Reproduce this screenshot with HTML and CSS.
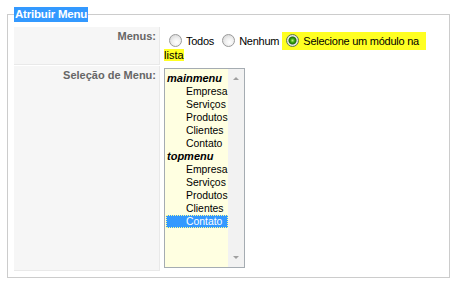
FILE: index.html
```html
<!DOCTYPE html>
<html>
<head>
<meta charset="utf-8">
<link rel="stylesheet" href="styles.css">
</head>
<body>
<fieldset class="adminform">
  <legend><span class="sel">Atribuir Menu</span></legend>
  <table class="admintable">
    <tr>
      <td class="key">Menus:</td>
      <td class="val">
        <span class="radio"></span><span class="lbl">Todos</span>
        <span class="radio"></span><span class="lbl">Nenhum</span>
        <span class="hl"><span class="rw"><span class="radio on"></span></span><span class="lbl hlbl">Selecione um módulo na</span> lista</span>
      </td>
    </tr>
    <tr>
      <td class="key">Seleção de Menu:</td>
      <td class="val">
        <div class="listbox">
          <div class="items">
            <div class="grp">mainmenu</div>
            <div class="opt">Empresa</div>
            <div class="opt">Serviços</div>
            <div class="opt">Produtos</div>
            <div class="opt">Clientes</div>
            <div class="opt">Contato</div>
            <div class="grp">topmenu</div>
            <div class="opt">Empresa</div>
            <div class="opt">Serviços</div>
            <div class="opt">Produtos</div>
            <div class="opt">Clientes</div>
            <div class="opt selected">Contato</div>
          </div>
          <div class="scroll">
            <span class="arrow up"></span>
            <span class="arrow down"></span>
          </div>
        </div>
      </td>
    </tr>
  </table>
</fieldset>
</body>
</html>
```
FILE: styles.css
```css
html, body {
  margin: 0;
  padding: 0;
  background: #fff;
}
body {
  font-family: "Liberation Sans", Arial, sans-serif;
  font-size: 11px;
}
.adminform {
  margin: 7px 9px 6px 7px;
  padding: 4px 5px 5px 5px;
  border: 1px solid #cccccc;
  min-width: 0;
}
.adminform legend {
  padding: 0;
  margin-left: 1px;
  font-size: 11.5px;
  letter-spacing: -0.2px;
  font-weight: bold;
  line-height: 15px;
}
.sel {
  background: #3399ff;
  color: #fff;
  display: inline-block;
  padding: 0 1px;
}
.admintable {
  width: 100%;
  border-collapse: separate;
  border-spacing: 1px;
}
.admintable td {
  padding: 3px;
  vertical-align: top;
}
.key {
  width: 139px;
  background: #f6f6f6;
  border-right: 1px solid #e9e9e9;
  border-bottom: 1px solid #e9e9e9;
  text-align: right;
  color: #666;
  font-weight: bold;
  line-height: 13px;
}
.val {
  color: #000;
  line-height: 14px;
}
.lbl {
  letter-spacing: -0.25px;
}
.radio {
  display: inline-block;
  width: 11px;
  height: 11px;
  border: 1px solid #9a9a9a;
  border-radius: 50%;
  background: radial-gradient(circle at 60% 65%, #ffffff 0%, #f0f0f0 40%, #cfcfcf 100%);
  vertical-align: -2px;
  margin: 4px 4px 0 5px;
}
.radio.on {
  background: radial-gradient(circle, #b6f07a 0, #3aa70f 2px, #1f6d0a 3.5px, #e8e8e8 4.5px, #c8c8c8 100%);
  border-color: #5a7a50;
  margin-left: 0;
}
.hl {
  background: #ffff22;
}
.rw {
  padding: 3px 0 3px 4px;
  background: #ffff22;
}
.hlbl {
  padding: 3px 7px 3px 0;
  background: #ffff22;
}
.listbox {
  display: flex;
  width: 79px;
  height: 198px;
  border: 1px solid #a5acb2;
  background: #ffffe1;
  margin-top: -1px;
}
.items {
  flex: 1;
  padding: 3px 0 0 1px;
  font-size: 10.4px;
  overflow: hidden;
}
.items > div {
  height: 13px;
  line-height: 13px;
}
.grp {
  font-weight: bold;
  font-style: italic;
  font-size: 11px;
  padding-left: 1px;
}
.opt {
  padding-left: 20px;
  white-space: nowrap;
}
.opt.selected {
  background: #3399ff;
  color: #fff;
  outline: 1px dotted #ffff99;
  outline-offset: -1px;
}
.scroll {
  width: 16px;
  background: #f2f2f2;
  position: relative;
}
.arrow {
  position: absolute;
  left: 5px;
  width: 0;
  height: 0;
  border-left: 3px solid transparent;
  border-right: 3px solid transparent;
}
.arrow.up {
  top: 8px;
  border-bottom: 3px solid #a0a0a0;
}
.arrow.down {
  bottom: 8px;
  border-top: 3px solid #a0a0a0;
}
```
